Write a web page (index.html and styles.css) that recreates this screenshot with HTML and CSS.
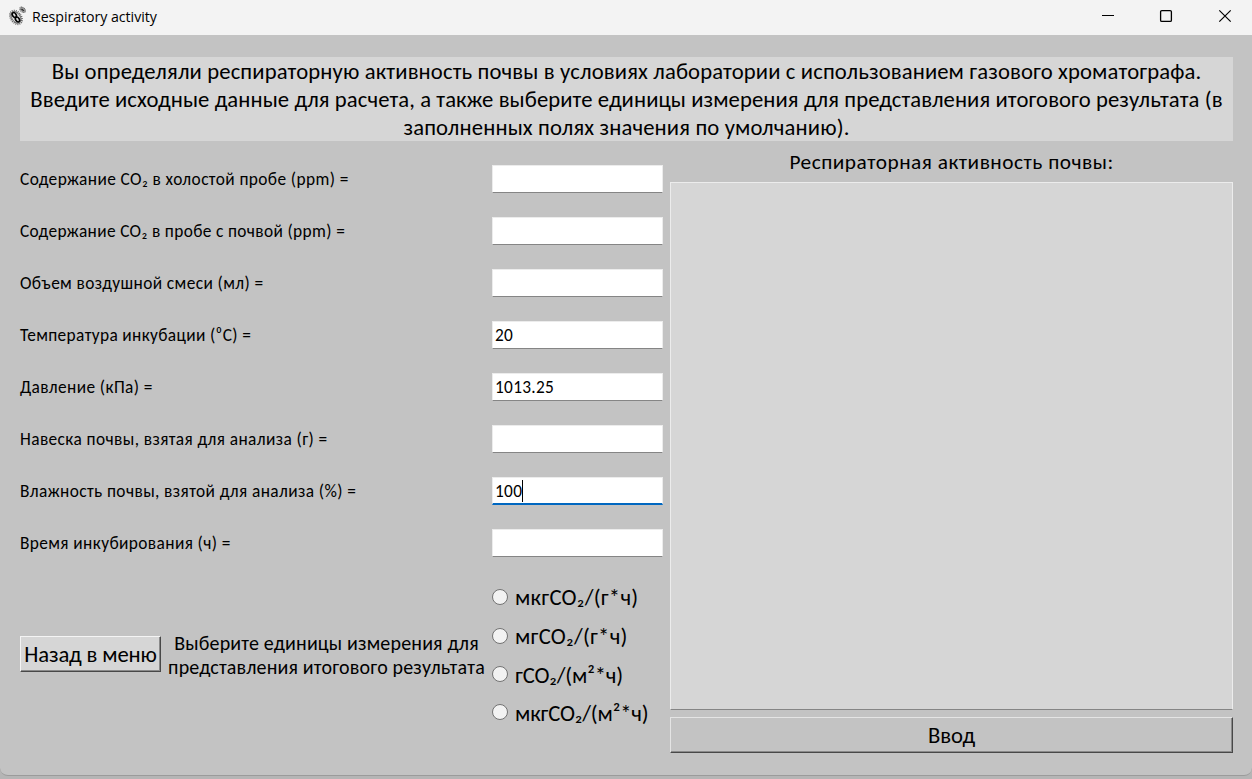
FILE: index.html
```
<!DOCTYPE html>
<html lang="ru">
<head>
<meta charset="utf-8">
<title>Respiratory activity</title>
<link rel="stylesheet" href="styles.css">
</head>
<body>
<div class="window">
  <header class="titlebar">
    <svg class="app-icon" width="20" height="20" viewBox="0 0 20 20" fill="none">
      <ellipse cx="8" cy="11.4" rx="5.2" ry="7.5" transform="rotate(-35 8 11.4)" stroke="#666" stroke-width="1.8" stroke-dasharray="1 1"/>
      <ellipse cx="8" cy="11.4" rx="4.2" ry="6.4" transform="rotate(-35 8 11.4)" fill="#ddd" stroke="#555" stroke-width=".8"/>
      <ellipse cx="6.3" cy="9" rx="1.8" ry="2.6" transform="rotate(-35 6.3 9)" stroke="#000" stroke-width="1.6"/>
      <ellipse cx="9.5" cy="13.5" rx="1.8" ry="2.6" transform="rotate(-35 9.5 13.5)" stroke="#000" stroke-width="1.6"/>
      <ellipse cx="14.6" cy="3.8" rx="2" ry="3.2" transform="rotate(-48 14.6 3.8)" fill="#aaa" stroke="#666" stroke-width="1.3" stroke-dasharray="1 .6"/>
      <path d="M13.4 3l2.4 1.8" stroke="#222" stroke-width="1.2"/>
    </svg>
    <span class="title">Respiratory activity</span>
    <svg class="controls" width="132" height="14" viewBox="0 0 132 14" fill="none" stroke="#000">
      <path d="M2 6.5h12" stroke-width="1"/>
      <rect x="60.6" y="1.6" width="10.8" height="10.8" rx="1.2" stroke-width="1.3"/>
      <path d="M119.3 1.3l11.4 11.4M130.7 1.3L119.3 12.7" stroke-width="1.2"/>
    </svg>
  </header>

  <main class="content">
    <p class="intro">
      <span class="intro-a">Вы определяли респираторную активность почвы в условиях лаборатории с использованием газового хроматографа.</span>
      <span class="intro-b">Введите исходные данные для расчета, а также выберите единицы измерения для представления итогового результата (в</span>
      <span class="intro-c">заполненных полях значения по умолчанию).</span>
    </p>

    <div class="columns">
      <section class="form">
        <div class="row"><span class="label">Содержание CO₂ в холостой пробе (ppm) =</span><div class="entry"></div></div>
        <div class="row"><span class="label tight">Содержание CO₂ в пробе с почвой (ppm) =</span><div class="entry"></div></div>
        <div class="row"><span class="label">Объем воздушной смеси (мл) =</span><div class="entry"></div></div>
        <div class="row"><span class="label tight">Температура инкубации (⁰С) =</span><div class="entry">20</div></div>
        <div class="row"><span class="label">Давление (кПа) =</span><div class="entry">1013.25</div></div>
        <div class="row"><span class="label">Навеска почвы, взятая для анализа (г) =</span><div class="entry"></div></div>
        <div class="row"><span class="label">Влажность почвы, взятой для анализа (%) =</span><div class="entry focused">100<i class="caret"></i></div></div>
        <div class="row"><span class="label">Время инкубирования (ч) =</span><div class="entry"></div></div>

        <div class="bottom">
          <button class="button back">Назад в меню</button>
          <div class="hint"><span>Выберите единицы измерения для</span><span>представления итогового результата</span></div>
          <div class="radios">
            <label class="radio"><i class="dot"></i><span class="wide">мкгCO₂/(г*ч)</span></label>
            <label class="radio"><i class="dot"></i><span class="wide">мгCO₂/(г*ч)</span></label>
            <label class="radio"><i class="dot"></i><span>гCO₂/(м²*ч)</span></label>
            <label class="radio"><i class="dot"></i><span>мкгCO₂/(м²*ч)</span></label>
          </div>
        </div>
      </section>

      <section class="result">
        <h1 class="result-title">Респираторная активность почвы:</h1>
        <div class="output"></div>
        <button class="button submit">Ввод</button>
      </section>
    </div>
  </main>
</div>
</body>
</html>
```
FILE: styles.css
```
* { box-sizing: border-box; }
body {
  margin: 0;
  height: 779px;
  overflow: hidden;
  background: #b5b5b5;
  font-family: Carlito, Calibri, Lato, sans-serif;
  color: #000;
}
.window {
  width: 1252px;
  height: 776px;
  border-bottom: 1px solid #9b9b9b;
  border-radius: 0 0 8px 8px;
  background: #c3c3c3;
  overflow: hidden;
}
.titlebar {
  display: flex;
  align-items: center;
  height: 35px;
  padding: 0 20px 3px 8px;
  background: #f3f3f3;
}
.title {
  margin-left: 4px;
  padding-top: 1px;
  font: 14.2px/20px "Open Sans", "Noto Sans", sans-serif;
  letter-spacing: -0.05px;
}
.controls { margin-left: auto; }
.content { padding: 22px 19px 0 20px; }
.intro {
  margin: 0;
  height: 84px;
  background: #d6d6d6;
  font-size: 22.67px;
  line-height: 28px;
  text-align: center;
  white-space: nowrap;
}
.intro span { display: block; }
.intro-a { letter-spacing: 0.13px; }
.intro-b { letter-spacing: 0.085px; }
.intro-c { letter-spacing: 0.14px; }
.columns { display: flex; gap: 7px; }
.form { width: 643px; padding-top: 12px; }
.row {
  display: flex;
  align-items: center;
  justify-content: space-between;
  height: 52px;
  font-size: 17.33px;
}
.label { letter-spacing: 0.4px; white-space: nowrap; }
.label.tight { letter-spacing: 0.36px; }
.entry {
  display: flex;
  align-items: center;
  width: 171px;
  height: 28px;
  padding: 0 2px;
  border: 1px solid #ececec;
  border-bottom-color: #858585;
  background: #fff;
  letter-spacing: 0.28px;
}
.entry.focused { border-bottom: 2px solid #0067c0; }
.caret { width: 1px; height: 22px; background: #000; }
.bottom { display: flex; align-items: center; height: 152px; margin-top: 10px; }
.button {
  height: 36px;
  padding: 0;
  border: 1px solid;
  border-color: #f4f4f4 #484848 #484848 #f4f4f4;
  border-radius: 0;
  box-shadow: inset -1px -1px #8a8a8a;
  font: 22.67px/28px Carlito, Calibri, Lato, sans-serif;
  color: #000;
  text-align: center;
}
.back {
  width: 141px;
  margin-bottom: 2px;
  background: #d6d6d6;
  letter-spacing: -0.15px;
}
.hint {
  width: 331px;
  font-size: 20px;
  line-height: 24px;
  letter-spacing: 0.17px;
  text-align: center;
  white-space: nowrap;
}
.hint span { display: block; }
.radios { display: grid; grid-template-rows: 39px 39px 38px 38px; margin-bottom: 2px; }
.radio {
  display: flex;
  align-items: center;
  gap: 7px;
  font-size: 22.67px;
  line-height: 28px;
  white-space: nowrap;
}
.radio span { padding-top: 1px; letter-spacing: -0.15px; }
.radio .wide { letter-spacing: 0.25px; }
.dot {
  width: 16px;
  height: 16px;
  border: 1px solid #727272;
  border-radius: 50%;
  background: #f2f2f2;
}
.result { width: 563px; }
.result-title {
  margin: 0;
  height: 41px;
  font-size: 21.33px;
  font-weight: 400;
  line-height: 42px;
  letter-spacing: 0.5px;
  text-align: center;
}
.output {
  height: 528px;
  margin-bottom: 7px;
  border: 1px solid #ececec;
  border-bottom-color: #858585;
  background: #d6d6d6;
}
.submit { width: 563px; background: #c3c3c3; border-color: #e4e4e4 #484848 #484848 #e4e4e4; }
```
